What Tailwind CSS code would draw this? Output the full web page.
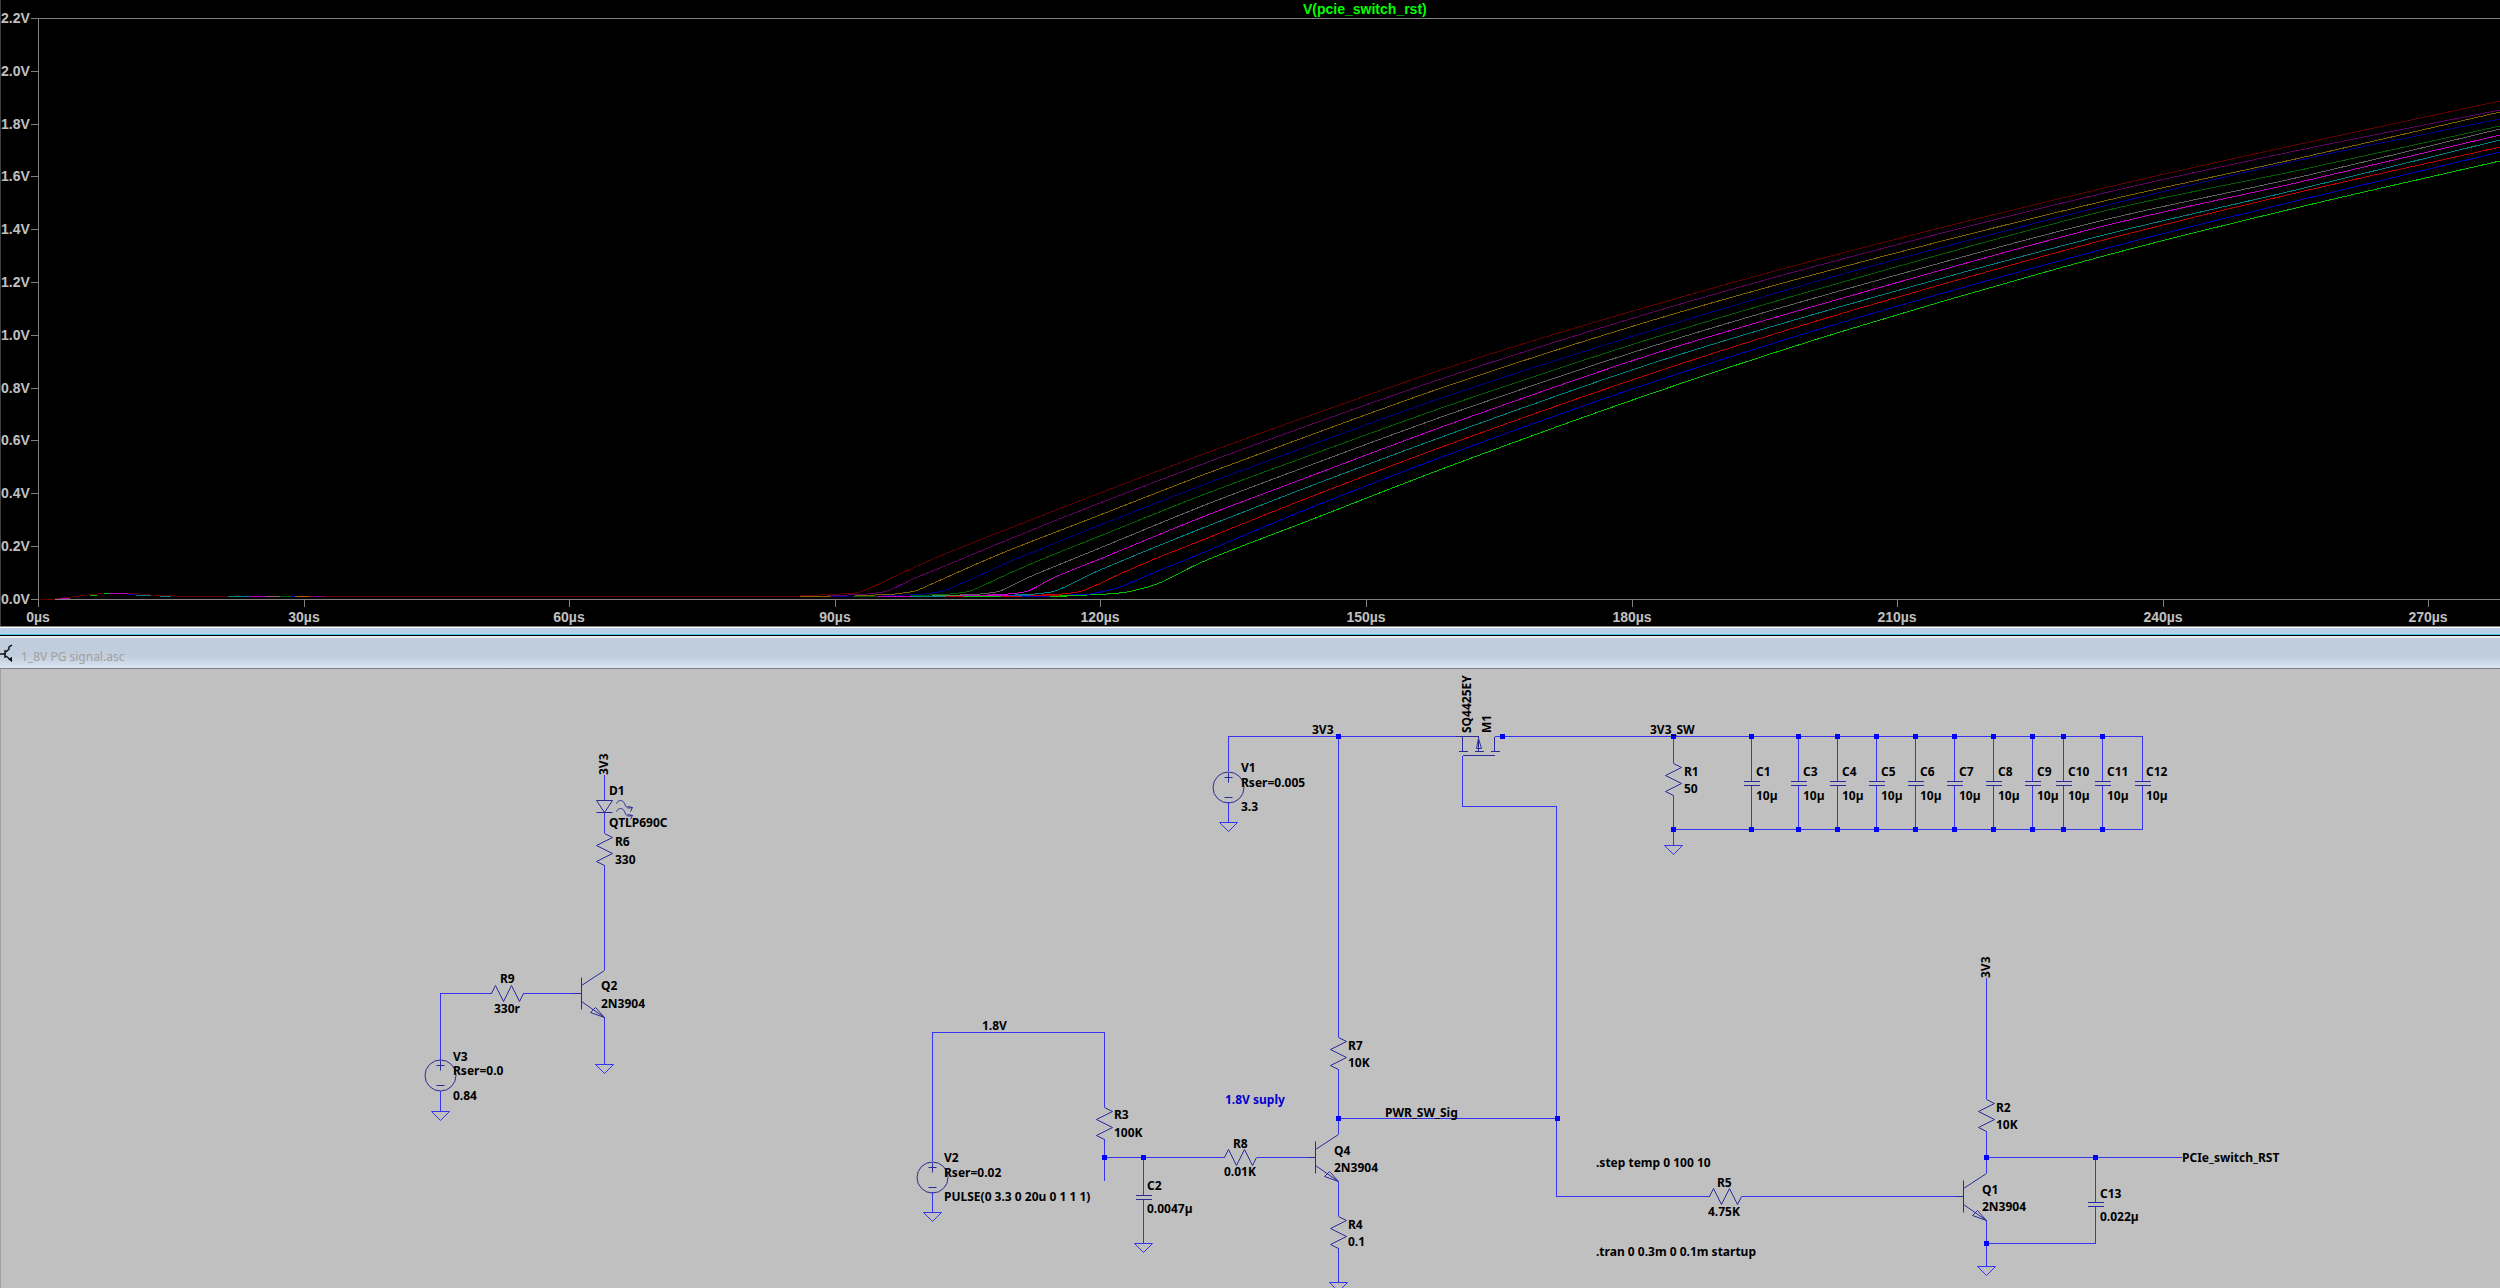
<!DOCTYPE html>
<html lang="en">
  <head>
    <meta charset="UTF-8">
    <meta name="viewport" content="width=device-width, initial-scale=1.0">
    <title>1_8V PG signal.asc</title>
    <script src="https://cdn.jsdelivr.net/npm/@tailwindcss/browser@4"></script>
  </head>

  <body class="bg-[#c0c0c0]">
    <!-- Waveform viewer -->
    <section class="bg-black border-b border-[#808080]">
      <svg viewBox="0 0 2500 626" class="block w-full font-['Liberation_Sans',Arial,sans-serif] text-[14px] font-bold">
        <path d="M0 0V626" stroke="#808080" fill="none" />
        <text x="1303" y="14" fill="#00ff00">V(pcie_switch_rst)</text>
        <g id="axes" stroke="#808080" fill="none" shape-rendering="crispEdges">
          <path d="M31 18H2500M38 18V607M31 599H2500" />
        </g>
        <g id="axis-labels" fill="#c0c0c0"></g>
        <g id="traces" fill="none" stroke-width="1" shape-rendering="crispEdges"></g>
      </svg>
    </section>

    <!-- Splitter between the two panes -->
    <div class="h-2 bg-[#b8cfe9] border-t border-white border-b border-b-[#45c8e8]"></div>
    <div class="h-[3px] bg-[#e4ebf5] border-t border-black"></div>

    <!-- Schematic window -->
    <header class="flex h-[30px] items-center gap-2 bg-linear-to-b from-[#c0cddc] from-60% to-[#d9e5f2]">
      <svg viewBox="0 0 13 18" class="w-[13px] h-[18px]" fill="none" stroke="#101010" stroke-width="1.5">
        <path d="M0 10H6M5 6V14M6 8L9 5V3L12 1M6 12L12 17" />
        <path d="M8 15L12 13V18Z" fill="#101010" stroke="none" />
      </svg>
      <h1 class="pt-2 font-['Noto_Sans','Open_Sans',sans-serif] text-[12px] text-[#a0a0a0]">1_8V PG signal.asc</h1>
    </header>

    <main class="border-t border-[#808080]">
      <svg viewBox="0 669 2500 619" class="block w-full font-['Noto_Sans','Open_Sans',sans-serif] text-[12px] font-bold">
        <defs>
          <path id="res" d="M0 0L8 4L-8 12L8 20L-8 28L0 32" />
          <path id="resh" d="M0 0L4 -8L12 8L20 -8L28 8L32 0" />
          <path id="cap" d="M-8 0H8M-8 4H8" />
          <path id="gnd" d="M-9 0H9L0 9Z" />
          <path id="npn" d="M-31 0H-23M-23 -16V16M-23 -8L0 -23M-23 8L0 24L-14 19L-9 14L0 24" />
          <g id="src">
            <circle r="15.5" />
            <path d="M-4 -10H4M0 -15V-5M-4 10H4" />
          </g>
          <path id="ray" d="M0 3C2 -1 6 -1 8 3C10 8 11 8 16 7M16 7L11 6M16 7L14 11" />
          <rect id="dot" x="-3" y="-2" width="5" height="5" />
        </defs>
        <path d="M0 669V1288" stroke="#808080" />

        <!-- Wires -->
        <g fill="none" stroke="#3434f2" shape-rendering="crispEdges" transform="translate(-.5 0)">
          <path d="M605 775V800M605 812V833M605 865V970M605 1017V1064" />
          <path d="M441 1060V993H492M523 993H574M441 1091V1111" />
          <path d="M933 1161V1032H1105V1107M1105 1139V1181M1105 1157H1225M1257 1157H1308M1144 1157V1195M1144 1199V1244M933 1192V1212" />
          <path d="M1229 771V736H1456M1229 802V822M1339 736V1037M1339 1069V1134M1339 1181V1216M1339 1248V1283" />
          <path d="M1495 736H2143V829H1674V845M1674 736V763M1674 795V829" />
          <path d="M1463 756V806H1557V1196H1710M1742 1196H1956M1339 1118H1557" />
          <path d="M1987 978V1099M1987 1131V1173M1987 1220V1266M1987 1157H2182M2096 1157V1202M2096 1206V1243H1987" />
          <path d="M1752 736V781M1752 785V829M1799 736V781M1799 785V829M1838 736V781M1838 785V829M1877 736V781M1877 785V829M1916 736V781M1916 785V829M1955 736V781M1955 785V829M1994 736V781M1994 785V829M2033 736V781M2033 785V829M2064 736V781M2064 785V829M2103 736V781M2103 785V829" />
          <path d="M2143 782V785" stroke="#c0c0c0" />
        </g>

        <!-- Grounds -->
        <g fill="none" stroke="#3434f2" transform="translate(-.5 .5)">
          <use href="#gnd" x="605" y="1064" />
          <use href="#gnd" x="441" y="1111" />
          <use href="#gnd" x="933" y="1212" />
          <use href="#gnd" x="1144" y="1243" />
          <use href="#gnd" x="1339" y="1282" />
          <use href="#gnd" x="1229" y="822" />
          <use href="#gnd" x="1674" y="845" />
          <use href="#gnd" x="1987" y="1266" />
        </g>

        <!-- Parts -->
        <g fill="none" stroke="#2a2a98" transform="translate(-.5 .5)">
          <use href="#res" x="605" y="833" />
          <use href="#res" x="1105" y="1107" />
          <use href="#res" x="1339" y="1037" />
          <use href="#res" x="1339" y="1216" />
          <use href="#res" x="1674" y="763" />
          <use href="#res" x="1987" y="1099" />
          <use href="#resh" x="492" y="993" />
          <use href="#resh" x="1225" y="1157" />
          <use href="#resh" x="1710" y="1196" />
          <use href="#src" x="441" y="1075" />
          <use href="#src" x="933" y="1177" />
          <use href="#src" x="1229" y="787" />
          <use href="#npn" x="605" y="993" />
          <use href="#npn" x="1339" y="1157" />
          <use href="#npn" x="1987" y="1196" />
          <path d="M597 800H613L605 812ZM597 812H613" />
          <use href="#ray" x="617" y="800" />
          <use href="#ray" x="617" y="808" />
          <g shape-rendering="crispEdges">
            <path d="M1456 736H1479M1463 736V751M1459 751H1468M1475 751H1484M1491 751H1500M1495 751V736M1463 755H1495" />
            <use href="#cap" x="1144" y="1195" />
            <use href="#cap" x="1752" y="781" />
            <use href="#cap" x="1799" y="781" />
            <use href="#cap" x="1838" y="781" />
            <use href="#cap" x="1877" y="781" />
            <use href="#cap" x="1916" y="781" />
            <use href="#cap" x="1955" y="781" />
            <use href="#cap" x="1994" y="781" />
            <use href="#cap" x="2033" y="781" />
            <use href="#cap" x="2064" y="781" />
            <use href="#cap" x="2103" y="781" />
            <use href="#cap" x="2143" y="781" />
            <use href="#cap" x="2096" y="1202" />
          </g>
          <path d="M1479 736V751M1479 738L1477 748H1482Z" />
        </g>

        <!-- Junctions -->
        <g fill="#0000ff" shape-rendering="crispEdges">
          <use href="#dot" x="1105" y="1157" />
          <use href="#dot" x="1144" y="1157" />
          <use href="#dot" x="1339" y="1118" />
          <use href="#dot" x="1558" y="1118" />
          <use href="#dot" x="1339" y="736" />
          <use href="#dot" x="1503" y="736" />
          <use href="#dot" x="1674" y="736" />
          <use href="#dot" x="1752" y="736" />
          <use href="#dot" x="1799" y="736" />
          <use href="#dot" x="1838" y="736" />
          <use href="#dot" x="1877" y="736" />
          <use href="#dot" x="1916" y="736" />
          <use href="#dot" x="1955" y="736" />
          <use href="#dot" x="1994" y="736" />
          <use href="#dot" x="2033" y="736" />
          <use href="#dot" x="2064" y="736" />
          <use href="#dot" x="2103" y="736" />
          <use href="#dot" x="1674" y="829" />
          <use href="#dot" x="1752" y="829" />
          <use href="#dot" x="1799" y="829" />
          <use href="#dot" x="1838" y="829" />
          <use href="#dot" x="1877" y="829" />
          <use href="#dot" x="1916" y="829" />
          <use href="#dot" x="1955" y="829" />
          <use href="#dot" x="1994" y="829" />
          <use href="#dot" x="2033" y="829" />
          <use href="#dot" x="2064" y="829" />
          <use href="#dot" x="2103" y="829" />
          <use href="#dot" x="1987" y="1157" />
          <use href="#dot" x="2096" y="1157" />
          <use href="#dot" x="1987" y="1243" />
        </g>

        <!-- Labels -->
        <g fill="#000000">
          <text transform="translate(608 775) rotate(-90)">3V3</text>
          <text x="609" y="795">D1</text>
          <text x="609" y="827">QTLP690C</text>
          <text x="615" y="846">R6</text>
          <text x="615" y="864">330</text>
          <text x="500" y="983">R9</text>
          <text x="494" y="1013">330r</text>
          <text x="601" y="990">Q2</text>
          <text x="601" y="1008">2N3904</text>
          <text x="453" y="1061">V3</text>
          <text x="453" y="1075">Rser=0.0</text>
          <text x="453" y="1100">0.84</text>

          <text x="982" y="1030">1.8V</text>
          <text x="944" y="1162">V2</text>
          <text x="944" y="1177">Rser=0.02</text>
          <text x="944" y="1201">PULSE(0 3.3 0 20u 0 1 1 1)</text>
          <text x="1114" y="1119">R3</text>
          <text x="1114" y="1137">100K</text>
          <text x="1147" y="1190">C2</text>
          <text x="1147" y="1213">0.0047µ</text>
          <text x="1233" y="1148">R8</text>
          <text x="1224" y="1176">0.01K</text>
          <text x="1225" y="1104" fill="#0000d0">1.8V suply</text>
          <text x="1348" y="1050">R7</text>
          <text x="1348" y="1067">10K</text>
          <text x="1334" y="1155">Q4</text>
          <text x="1334" y="1172">2N3904</text>
          <text x="1348" y="1229">R4</text>
          <text x="1348" y="1246">0.1</text>
          <text x="1385" y="1117">PWR_SW_Sig</text>

          <text x="1241" y="772">V1</text>
          <text x="1241" y="787">Rser=0.005</text>
          <text x="1241" y="811">3.3</text>
          <text x="1312" y="734">3V3</text>
          <text transform="translate(1471 733) rotate(-90)">SQ4425EY</text>
          <text transform="translate(1491 733) rotate(-90)">M1</text>
          <text x="1650" y="734">3V3_SW</text>
          <text x="1684" y="776">R1</text>
          <text x="1684" y="793">50</text>

          <text x="1756" y="776">C1</text>
          <text x="1803" y="776">C3</text>
          <text x="1842" y="776">C4</text>
          <text x="1881" y="776">C5</text>
          <text x="1920" y="776">C6</text>
          <text x="1959" y="776">C7</text>
          <text x="1998" y="776">C8</text>
          <text x="2037" y="776">C9</text>
          <text x="2068" y="776">C10</text>
          <text x="2107" y="776">C11</text>
          <text x="2146" y="776">C12</text>
          <text x="1756" y="800">10µ</text>
          <text x="1803" y="800">10µ</text>
          <text x="1842" y="800">10µ</text>
          <text x="1881" y="800">10µ</text>
          <text x="1920" y="800">10µ</text>
          <text x="1959" y="800">10µ</text>
          <text x="1998" y="800">10µ</text>
          <text x="2037" y="800">10µ</text>
          <text x="2068" y="800">10µ</text>
          <text x="2107" y="800">10µ</text>
          <text x="2146" y="800">10µ</text>

          <text transform="translate(1990 978) rotate(-90)">3V3</text>
          <text x="1996" y="1112">R2</text>
          <text x="1996" y="1129">10K</text>
          <text x="1982" y="1194">Q1</text>
          <text x="1982" y="1211">2N3904</text>
          <text x="2100" y="1198">C13</text>
          <text x="2100" y="1221">0.022µ</text>
          <text x="2182" y="1162">PCIe_switch_RST</text>
          <text x="1596" y="1167">.step temp 0 100 10</text>
          <text x="1596" y="1256">.tran 0 0.3m 0 0.1m startup</text>
          <text x="1717" y="1187">R5</text>
          <text x="1708" y="1216">4.75K</text>
        </g>
      </svg>
    </main>

    <script>
      const NS = "http://www.w3.org/2000/svg";

      function add(parentId, tag, attrs, text) {
        const el = document.createElementNS(NS, tag);
        for (const key in attrs) el.setAttribute(key, attrs[key]);
        if (text) el.textContent = text;
        document.getElementById(parentId).appendChild(el);
      }

      // Voltage axis, 2.2V down to 0.0V
      for (let i = 0; i <= 11; i++) {
        const y = Math.round(18 + i * 52.8);
        add("axes", "path", { d: `M31 ${y}H38` });
        add("axis-labels", "text", { x: 1, y: y + 5 }, (2.2 - i * 0.2).toFixed(1) + "V");
      }

      // Time axis
      for (let i = 0; i <= 9; i++) {
        const x = Math.round(38 + i * 265.6);
        add("axes", "path", { d: `M${x} 599V607` });
        add("axis-labels", "text", { x: x, y: 622, "text-anchor": "middle" }, i * 30 + "µs");
      }

      // One run per temperature step. Every run shares the x positions
      // of the tail, the head holds the points where it lifts off.
      const tailX = [1450, 1650, 1850, 2100, 2300, 2500];
      const runs = [
        ["#00c000", [[1127, 592], [1157, 584], [1200, 563], [1250, 543], [1300, 524]], [466, 394, 329, 257, 207, 161]],
        ["#0000c0", [[1110, 590], [1123, 586], [1153, 573], [1200, 554], [1300, 512]], [454, 383, 320, 250, 200, 152]],
        ["#c00000", [[1082, 591], [1120, 574], [1157, 558], [1200, 541], [1300, 501]], [444, 374, 311, 241, 192, 147]],
        ["#008080", [[1055, 591], [1077, 581], [1100, 570], [1200, 529], [1300, 490]], [434, 364, 304, 236, 189, 140]],
        ["#c000c0", [[1028, 591], [1053, 578], [1100, 559], [1200, 518], [1300, 480]], [424, 355, 296, 227, 182, 135]],
        ["#606060", [[1000, 591], [1027, 578], [1100, 548], [1200, 507], [1300, 469]], [414, 347, 288, 221, 177, 129]],
        ["#006000", [[970, 591], [997, 579], [1033, 563], [1100, 536], [1200, 496], [1300, 459]], [405, 339, 280, 212, 170, 126]],
        ["#000088", [[943, 591], [967, 581], [1000, 566], [1033, 552], [1100, 525], [1200, 486], [1300, 449]], [395, 331, 272, 207, 160, 119]],
        ["#806000", [[915, 591], [927, 586], [1000, 554], [1100, 515], [1200, 476], [1297, 440]], [385, 321, 265, 202, 158, 112]],
        ["#600060", [[887, 591], [913, 579], [940, 568], [1000, 543], [1100, 503], [1268, 440]], [376, 313, 257, 194, 150, 110]],
        ["#600000", [[860, 592], [887, 580], [933, 559], [1000, 532], [1100, 493], [1242, 440]], [367, 306, 251, 189, 144, 101]]
      ];

      // Catmull-Rom through the points, as cubic segments
      function smooth(p) {
        let d = `M${p[0]}`;
        for (let i = 0; i < p.length - 1; i++) {
          const a = p[i - 1] || p[i], b = p[i], c = p[i + 1], e = p[i + 2] || c;
          const h = (c[0] - b[0]) / 3;
          const mb = (c[1] - a[1]) / (c[0] - a[0]);
          const mc = (e[1] - b[1]) / (e[0] - b[0]);
          d += `C${b[0] + h} ${b[1] + mb * h} ${c[0] - h} ${c[1] - mc * h} ${c}`;
        }
        return d;
      }

      for (const [color, head, tail] of runs) {
        const start = head[0][0];
        const points = [[start - 20, 594], ...head, ...tailX.map((x, i) => [x, tail[i]])];
        add("traces", "path", { d: `M39 599H55L80 596L105 593H130L150 595L175 596H${start - 60}L${start - 20} 594`, stroke: color });
        add("traces", "path", { d: smooth(points), stroke: color });
      }

      // Spots near zero where another run shows over the top one
      const spots = [
        [60, 70, 598, "#c000c0"], [90, 97, 595, "#00c000"], [104, 110, 593, "#00c000"],
        [110, 128, 593, "#c000c0"], [128, 136, 594, "#0000c0"], [136, 151, 595, "#008080"],
        [160, 171, 596, "#008080"], [228, 250, 596, "#008080"], [250, 266, 596, "#c000c0"],
        [266, 280, 596, "#906060"], [280, 291, 596, "#006000"], [291, 295, 596, "#0000c0"],
        [295, 309, 596, "#b06000"], [309, 325, 596, "#900070"],
        [800, 831, 596, "#806000"], [831, 853, 596, "#000088"], [853, 878, 596, "#006000"],
        [878, 912, 596, "#c000c0"], [912, 946, 596, "#008080"], [946, 963, 596, "#c00000"],
        [963, 1001, 596, "#00c000"], [932, 962, 595, "#509050"], [962, 1010, 595, "#c000c0"],
        [1010, 1030, 595, "#0060c0"], [1030, 1060, 595, "#c00000"], [1060, 1080, 595, "#00c000"]
      ];
      for (const [x1, x2, y, color] of spots) {
        add("traces", "path", { d: `M${x1} ${y}H${x2}`, stroke: color });
      }
    </script>
  </body>
</html>
